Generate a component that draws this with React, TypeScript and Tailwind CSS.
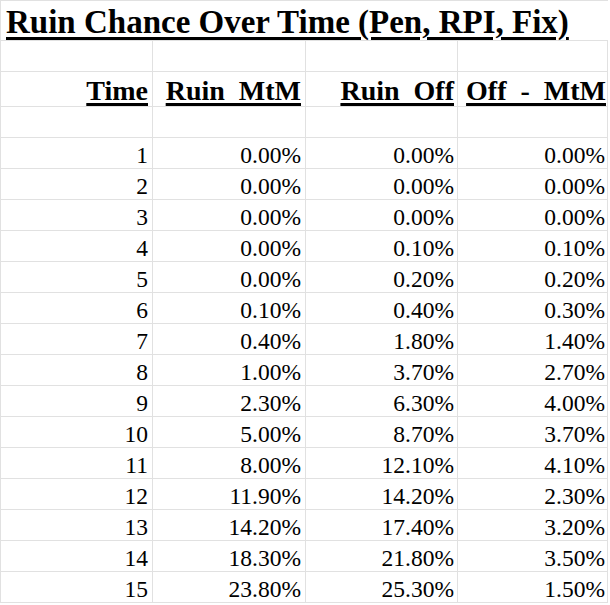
import React from "react";

const rows: [number, string, string, string][] = [
  [1, "0.00%", "0.00%", "0.00%"],
  [2, "0.00%", "0.00%", "0.00%"],
  [3, "0.00%", "0.00%", "0.00%"],
  [4, "0.00%", "0.10%", "0.10%"],
  [5, "0.00%", "0.20%", "0.20%"],
  [6, "0.10%", "0.40%", "0.30%"],
  [7, "0.40%", "1.80%", "1.40%"],
  [8, "1.00%", "3.70%", "2.70%"],
  [9, "2.30%", "6.30%", "4.00%"],
  [10, "5.00%", "8.70%", "3.70%"],
  [11, "8.00%", "12.10%", "4.10%"],
  [12, "11.90%", "14.20%", "2.30%"],
  [13, "14.20%", "17.40%", "3.20%"],
  [14, "18.30%", "21.80%", "3.50%"],
  [15, "23.80%", "25.30%", "1.50%"],
];

const c1 = "w-[152px] border-r border-b border-[#e1e1e1] flex items-end justify-end pr-[4px]";
const c2 = "w-[153px] border-r border-b border-[#e1e1e1] flex items-end justify-end pr-[4px]";
const c3 = "w-[152px] border-r border-b border-[#e1e1e1] flex items-end justify-end pr-[3px]";
const c4 = "w-[150px] border-r border-b border-[#e1e1e1] flex items-end justify-end pr-[2px]";
const c4h = "w-[150px] border-r border-b border-[#e1e1e1] flex items-end justify-end pr-[1px]";

function BlankRow() {
  return (
    <div className="flex h-[31px]">
      <div className={c1} />
      <div className={c2} />
      <div className={c3} />
      <div className={c4} />
    </div>
  );
}

export default function App() {
  const hdr =
    "font-bold text-[28px] leading-none whitespace-pre underline decoration-[2.5px] underline-offset-[3px] pb-[1px]";
  const dat = "text-[23.5px] leading-none whitespace-pre pb-[1px]";
  return (
    <div className="w-[610px] h-[605px] bg-white overflow-hidden [font-family:'Liberation_Serif','Times_New_Roman',serif] text-black">
      <div className="w-[608px] border-l border-t border-[#e1e1e1] box-border">
        <div className="h-[40px] border-b border-[#e1e1e1] flex items-end pl-[5px]">
          <span className="font-bold text-[33px] leading-none whitespace-pre underline decoration-[3px] underline-offset-[4px] pb-[1px]">
            Ruin Chance Over Time (Pen, RPI, Fix)
          </span>
        </div>
        <BlankRow />
        <div className="flex h-[35px]">
          <div className={c1}>
            <span className={hdr}>Time</span>
          </div>
          <div className={c2}>
            <span className={hdr}>{"Ruin  MtM"}</span>
          </div>
          <div className={c3}>
            <span className={hdr}>{"Ruin  Off"}</span>
          </div>
          <div className={c4h}>
            <span className={hdr}>{"Off  -  MtM"}</span>
          </div>
        </div>
        <BlankRow />
        {rows.map((r) => (
          <div key={r[0]} className="flex h-[31px]">
            <div className={c1}>
              <span className={dat}>{r[0]}</span>
            </div>
            <div className={c2}>
              <span className={dat}>{r[1]}</span>
            </div>
            <div className={c3}>
              <span className={dat}>{r[2]}</span>
            </div>
            <div className={c4}>
              <span className={dat}>{r[3]}</span>
            </div>
          </div>
        ))}
      </div>
    </div>
  );
}
